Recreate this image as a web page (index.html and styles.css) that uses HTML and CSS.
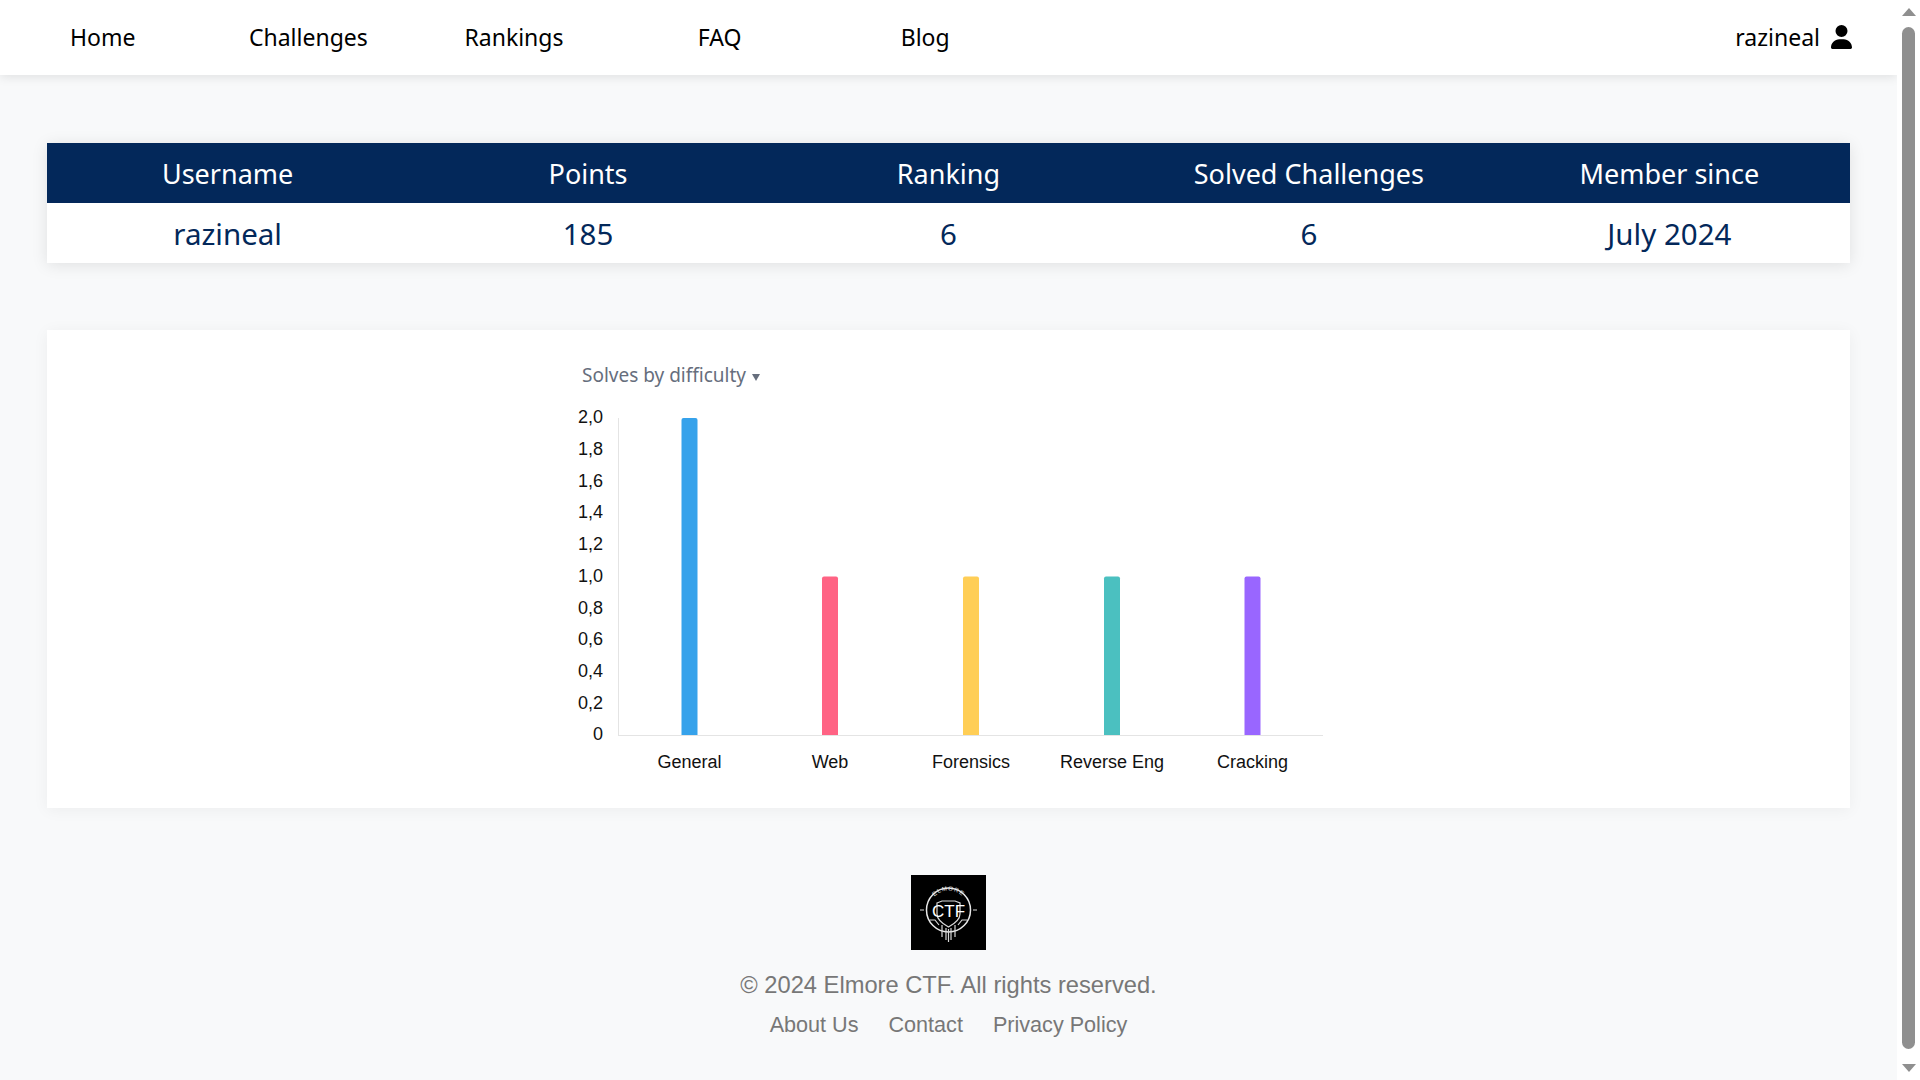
FILE: index.html
```html
<!DOCTYPE html>
<html lang="en">
<head>
    <meta charset="UTF-8">
    <meta name="viewport" content="width=device-width, initial-scale=1.0">
    <title>Elmore CTF - Profile</title>
    <link rel="stylesheet" href="styles.css">
</head>
<body>
    <div class="page">
        <header class="topbar">
            <nav class="nav-links">
                <a href="#">Home</a>
                <a href="#">Challenges</a>
                <a href="#">Rankings</a>
                <a href="#">FAQ</a>
                <a href="#">Blog</a>
            </nav>
            <a href="#" class="nav-user">
                razineal
                <svg class="user-icon" viewBox="0 0 448 512"><path d="M224 256A128 128 0 1 0 224 0a128 128 0 1 0 0 256zm-45.7 48C79.8 304 0 383.8 0 482.3C0 498.7 13.3 512 29.7 512H418.3c16.4 0 29.7-13.3 29.7-29.7C448 383.8 368.2 304 269.7 304H178.3z"/></svg>
            </a>
        </header>

        <main class="content">
            <table class="stats">
                <thead>
                    <tr>
                        <th>Username</th>
                        <th>Points</th>
                        <th>Ranking</th>
                        <th>Solved Challenges</th>
                        <th>Member since</th>
                    </tr>
                </thead>
                <tbody>
                    <tr>
                        <td>razineal</td>
                        <td>185</td>
                        <td>6</td>
                        <td>6</td>
                        <td>July 2024</td>
                    </tr>
                </tbody>
            </table>

            <section class="chart-card">
                <svg class="chart" viewBox="548 330 801 478" width="801" height="478">
                    <text class="chart-title" x="582" y="382">Solves by difficulty</text>
                    <polygon class="chart-caret" points="752,374 760,374 756,381"/>

                    <line class="axis" x1="618.5" y1="418" x2="618.5" y2="736"/>
                    <line class="axis" x1="618" y1="735.5" x2="1323" y2="735.5"/>

                    <g class="y-labels">
                        <text x="603" y="423">2,0</text>
                        <text x="603" y="455">1,8</text>
                        <text x="603" y="487">1,6</text>
                        <text x="603" y="518">1,4</text>
                        <text x="603" y="550">1,2</text>
                        <text x="603" y="582">1,0</text>
                        <text x="603" y="614">0,8</text>
                        <text x="603" y="645">0,6</text>
                        <text x="603" y="677">0,4</text>
                        <text x="603" y="709">0,2</text>
                        <text x="603" y="740">0</text>
                    </g>

                    <path class="bar bar-blue" d="M681.500 735V420a2 2 0 0 1 2-2h12a2 2 0 0 1 2 2V735z"/>
                    <path class="bar bar-pink" d="M822 735V578.500a2 2 0 0 1 2-2h12a2 2 0 0 1 2 2V735z"/>
                    <path class="bar bar-yellow" d="M963 735V578.500a2 2 0 0 1 2-2h12a2 2 0 0 1 2 2V735z"/>
                    <path class="bar bar-teal" d="M1104 735V578.500a2 2 0 0 1 2-2h12a2 2 0 0 1 2 2V735z"/>
                    <path class="bar bar-purple" d="M1244.500 735V578.500a2 2 0 0 1 2-2h12a2 2 0 0 1 2 2V735z"/>

                    <g class="x-labels">
                        <text x="689.5" y="768">General</text>
                        <text x="830" y="768">Web</text>
                        <text x="971" y="768">Forensics</text>
                        <text x="1112" y="768">Reverse Eng</text>
                        <text x="1252.5" y="768">Cracking</text>
                    </g>
                </svg>
            </section>
        </main>

        <footer class="footer">
            <svg class="logo" viewBox="0 0 75 75">
                <rect width="75" height="75" fill="#000"/>
                <defs>
                    <path id="logo-arc" d="M18 35a19.500 19.500 0 0 1 39 0"/>
                </defs>
                <circle cx="37.500" cy="35" r="22" class="logo-ring"/>
                <text class="logo-name"><textPath href="#logo-arc" startOffset="50%">ELMORE</textPath></text>
                <path class="logo-line" d="M26 28l5-2h13l5 2v11c0 6-6 10-11.500 13c-5.500-3-11.500-7-11.500-13z"/>
                <text class="logo-ctf" x="37.500" y="42">CTF</text>
                <path class="logo-line" d="M31 50v12M35 53v12M37.500 54v13M40 53v12M44 50v12"/>
                <path class="logo-line" d="M19 45h5l4 5M56 45h-5l-4 5M9 35h4M62 35h4"/>
            </svg>
            <p class="copyright">© 2024 Elmore CTF. All rights reserved.</p>
            <div class="footer-links">
                <a href="#">About Us</a>
                <a href="#">Contact</a>
                <a href="#">Privacy Policy</a>
            </div>
        </footer>
    </div>

    <div class="scrollbar">
        <span class="arrow-up"></span>
        <span class="thumb"></span>
        <span class="arrow-down"></span>
    </div>
</body>
</html>
```

FILE: styles.css
```css
html, body {
    height: 100%;
}
body {
    margin: 0;
    display: flex;
    height: 1080px;
    overflow: hidden;
    background-color: #f8f9fa;
    font-family: "Noto Sans", sans-serif;
    color: #000;
}
a {
    color: inherit;
    text-decoration: none;
}
.page {
    flex: 1;
    min-width: 0;
}

/* Top bar */
.topbar {
    display: flex;
    justify-content: space-between;
    align-items: center;
    height: 75px;
    padding-bottom: 2px;
    box-sizing: border-box;
    background-color: #fff;
    box-shadow: 0 2px 10px rgba(0, 0, 0, 0.1);
}
.nav-links {
    display: flex;
}
.nav-links a {
    width: 205.6px;
    text-align: center;
    font-size: 23px;
}
.nav-user {
    display: flex;
    align-items: center;
    gap: 11px;
    padding-right: 45px;
    font-size: 23px;
}
.user-icon {
    width: 21px;
    height: 24px;
}

/* Stats table and chart */
.content {
    padding: 68px 2.5% 0;
}
.stats {
    width: 100%;
    table-layout: fixed;
    border-collapse: collapse;
    background-color: #fff;
    box-shadow: 0 2px 15px rgba(0, 0, 0, 0.1);
}
.stats th,
.stats td {
    height: 60px;
    padding: 0;
    text-align: center;
    font-weight: 400;
}
.stats th {
    font-size: 27px;
    background-color: #03285a;
    color: #fff;
}
.stats td {
    font-size: 29.500px;
    color: #03285a;
}
.chart-card {
    display: flex;
    justify-content: center;
    height: 478px;
    margin-top: 67px;
    background-color: #fff;
    box-shadow: 0 2px 15px rgba(0, 0, 0, 0.05);
}
.chart-title {
    font-size: 19px;
    fill: #666e7d;
}
.chart-caret {
    fill: #666e7d;
}
.axis {
    stroke: #e4e4e4;
    stroke-width: 1;
}
.y-labels text,
.x-labels text {
    font-family: "Liberation Sans", Arial, sans-serif;
    font-size: 18px;
    fill: #111;
}
.y-labels text {
    text-anchor: end;
}
.x-labels text {
    text-anchor: middle;
}
.bar-blue { fill: #36a2eb; }
.bar-pink { fill: #ff6384; }
.bar-yellow { fill: #ffce56; }
.bar-teal { fill: #4bc0c0; }
.bar-purple { fill: #9966ff; }

/* Footer */
.footer {
    margin-top: 67px;
    text-align: center;
    font-family: "Liberation Sans", Arial, sans-serif;
    color: #777;
}
.logo {
    display: block;
    width: 75px;
    height: 75px;
    margin: 0 auto;
}
.logo-ring {
    fill: none;
    stroke: #e8e8e8;
    stroke-width: 1.500;
}
.logo-line {
    fill: none;
    stroke: #d8d8d8;
    stroke-width: 1.200;
}
.logo-name {
    font-family: "Liberation Sans", Arial, sans-serif;
    font-size: 6px;
    letter-spacing: 1px;
    fill: #e8e8e8;
    text-anchor: middle;
}
.logo-ctf {
    font-family: "Liberation Sans", Arial, sans-serif;
    font-size: 17px;
    fill: #fff;
    text-anchor: middle;
}
.copyright {
    margin: 22px 0 13px;
    font-size: 23.700px;
}
.footer-links {
    display: flex;
    justify-content: center;
    gap: 30px;
    font-size: 21.600px;
}

/* Fake window scrollbar */
.scrollbar {
    display: flex;
    flex-direction: column;
    align-items: center;
    flex: 0 0 23px;
    height: 1080px;
    padding: 8px 0;
    box-sizing: border-box;
    background-color: #fff;
}
.thumb {
    flex: 1;
    width: 13px;
    margin: 11px 0 15px;
    border-radius: 7px;
    background-color: #8f8f8f;
}
.arrow-up,
.arrow-down {
    width: 0;
    height: 0;
    border-left: 7.5px solid transparent;
    border-right: 7.5px solid transparent;
}
.arrow-up {
    border-bottom: 8px solid #8f8f8f;
}
.arrow-down {
    border-top: 8px solid #8f8f8f;
}
```
